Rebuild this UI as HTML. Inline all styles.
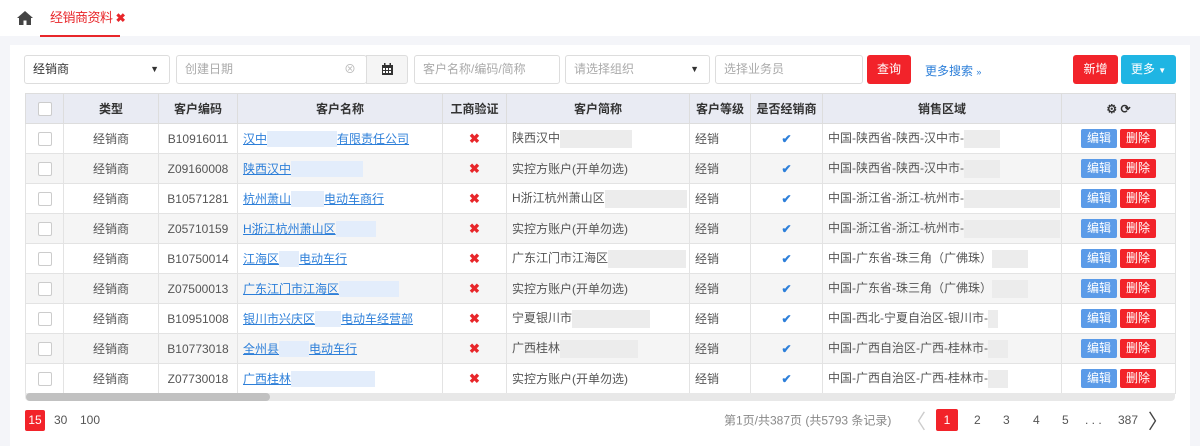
<!DOCTYPE html>
<html><head><meta charset="utf-8"><style>
*{box-sizing:border-box;margin:0;padding:0}
body{width:1200px;height:446px;overflow:hidden;background:#f4f5f9;font-family:"Liberation Sans","Noto Sans CJK SC",sans-serif;font-size:12px;color:#555;position:relative}
.top{position:absolute;left:0;top:0;width:1200px;height:36px;background:#fff}
.tab{position:absolute;left:40px;top:0;width:80px;height:37px;border-bottom:2px solid #e8262a;color:#e8262a;font-size:13px;line-height:36px;padding-left:10px;white-space:nowrap;letter-spacing:-0.5px}
.panel{position:absolute;left:10px;top:45px;width:1180px;height:401px;background:#fff}
.inp{position:absolute;top:55px;height:29px;border:1px solid #ddd;border-radius:3px;background:#fff;color:#aaa;line-height:27px;padding-left:8px;font-size:12px}
.btn{position:absolute;top:55px;height:29px;border-radius:3px;color:#fff;line-height:29px;text-align:center;font-size:12px}
table{position:absolute;left:25px;top:93px;border-collapse:collapse;table-layout:fixed;width:1150px}
th{background:#e9ebf3;height:30px;font-weight:bold;color:#333;border:1px solid #ddd;font-size:12px}
td{height:30px;border:1px solid #e3e3e3;text-align:center;white-space:nowrap;overflow:hidden;font-size:12px}
tr:nth-child(odd) td{background:#f5f5f5}
td.l{text-align:left;padding-left:5px}
a{color:#2d7fd9;text-decoration:underline}
.cb{display:inline-block;width:14px;height:14px;border:1px solid #ccc;border-radius:2px;background:#fff;vertical-align:middle}
.x{color:#e8262a;font-weight:bold;font-size:13px}
.ok{color:#2d7fd9;font-weight:bold}
.bl{display:inline-block;height:16px;vertical-align:middle;background:#e3edfb}
.bg{display:inline-block;height:18px;vertical-align:middle;background:#ececec}
.e{display:inline-block;width:36px;height:19px;line-height:19px;background:#5b9be8;color:#fff;border-radius:2px;margin-right:3px}
.d{display:inline-block;width:36px;height:19px;line-height:19px;background:#f2232a;color:#fff;border-radius:2px}
.pg{position:absolute;top:420px;transform:translateY(-50%);font-size:12px;color:#555}
</style></head><body>
<div class="top"></div>
<svg style="position:absolute;left:17px;top:11px" width="16" height="14" viewBox="0 0 16 14"><path d="M8 0L0 7h2v7h4.5V9.5h3V14H14V7h2z" fill="#444"/></svg>
<div class="tab">经销商资料 <b style="font-size:12px">✖</b></div>
<div class="panel"></div>
<div class="inp" style="left:24px;width:146px;color:#333">经销商<span style="position:absolute;right:10px;color:#333;font-size:9px">▼</span></div>
<div class="inp" style="left:176px;width:191px">创建日期<span style="position:absolute;right:10px;color:#bbb">⊗</span></div>
<div class="inp" style="left:366px;width:42px;background:#f5f5f5;border-radius:0 3px 3px 0;padding:0;text-align:center;color:#333">
<svg width="13" height="13" viewBox="0 0 13 13" style="margin-top:7px"><rect x="1" y="2" width="11" height="10" fill="#333"/><rect x="2" y="5" width="2" height="2" fill="#fff"/><rect x="5" y="5" width="2" height="2" fill="#fff"/><rect x="8" y="5" width="2" height="2" fill="#fff"/><rect x="2" y="8" width="2" height="2" fill="#fff"/><rect x="5" y="8" width="2" height="2" fill="#fff"/><rect x="8" y="8" width="2" height="2" fill="#fff"/><rect x="3" y="0" width="1.5" height="3" fill="#333"/><rect x="8.5" y="0" width="1.5" height="3" fill="#333"/></svg></div>
<div class="inp" style="left:414px;width:146px">客户名称/编码/简称</div>
<div class="inp" style="left:565px;width:145px">请选择组织<span style="position:absolute;right:10px;color:#333;font-size:9px">▼</span></div>
<div class="inp" style="left:715px;width:148px">选择业务员</div>
<div class="btn" style="left:867px;width:44px;background:#f2232a">查询</div>
<div style="position:absolute;left:925px;top:62px;color:#2d7fd9">更多搜索 <span style="font-size:9px">»</span></div>
<div class="btn" style="left:1073px;width:45px;background:#f2232a">新增</div>
<div class="btn" style="left:1121px;width:55px;background:#1fb5e3">更多 <span style="font-size:8px">▼</span></div>
<table>
<colgroup><col style="width:38px"><col style="width:95px"><col style="width:79px"><col style="width:205px"><col style="width:64px"><col style="width:183px"><col style="width:61px"><col style="width:72px"><col style="width:239px"><col style="width:114px"></colgroup>
<tr><th style="background:#e9ebf3"><span class="cb"></span></th><th style="background:#e9ebf3">类型</th><th style="background:#e9ebf3">客户编码</th><th>客户名称</th><th>工商验证</th><th>客户简称</th><th>客户等级</th><th>是否经销商</th><th>销售区域</th><th>⚙ ⟳</th></tr>
<tr><td><span class="cb"></span></td><td>经销商</td><td>B10916011</td><td class="l"><a>汉中</a><span class="bl" style="width:70px"></span><a>有限责任公司</a></td><td class="x">✖</td><td class="l">陕西汉中<span class="bg" style="width:72px"></span></td><td class="l">经销</td><td class="ok">✔</td><td class="l">中国-陕西省-陕西-汉中市-<span class="bg" style="width:36px"></span></td><td><span class="e">编辑</span><span class="d">删除</span></td></tr>
<tr><td><span class="cb"></span></td><td>经销商</td><td>Z09160008</td><td class="l"><a>陕西汉中</a><span class="bl" style="width:72px"></span></td><td class="x">✖</td><td class="l">实控方账户(开单勿选)</td><td class="l">经销</td><td class="ok">✔</td><td class="l">中国-陕西省-陕西-汉中市-<span class="bg" style="width:36px"></span></td><td><span class="e">编辑</span><span class="d">删除</span></td></tr>
<tr><td><span class="cb"></span></td><td>经销商</td><td>B10571281</td><td class="l"><a>杭州萧山</a><span class="bl" style="width:33px"></span><a>电动车商行</a></td><td class="x">✖</td><td class="l">H浙江杭州萧山区<span class="bg" style="width:82px"></span></td><td class="l">经销</td><td class="ok">✔</td><td class="l">中国-浙江省-浙江-杭州市-<span class="bg" style="width:96px"></span></td><td><span class="e">编辑</span><span class="d">删除</span></td></tr>
<tr><td><span class="cb"></span></td><td>经销商</td><td>Z05710159</td><td class="l"><a>H浙江杭州萧山区</a><span class="bl" style="width:40px"></span></td><td class="x">✖</td><td class="l">实控方账户(开单勿选)</td><td class="l">经销</td><td class="ok">✔</td><td class="l">中国-浙江省-浙江-杭州市-<span class="bg" style="width:96px"></span></td><td><span class="e">编辑</span><span class="d">删除</span></td></tr>
<tr><td><span class="cb"></span></td><td>经销商</td><td>B10750014</td><td class="l"><a>江海区</a><span class="bl" style="width:20px"></span><a>电动车行</a></td><td class="x">✖</td><td class="l">广东江门市江海区<span class="bg" style="width:78px"></span></td><td class="l">经销</td><td class="ok">✔</td><td class="l">中国-广东省-珠三角（广佛珠）<span class="bg" style="width:36px"></span></td><td><span class="e">编辑</span><span class="d">删除</span></td></tr>
<tr><td><span class="cb"></span></td><td>经销商</td><td>Z07500013</td><td class="l"><a>广东江门市江海区</a><span class="bl" style="width:60px"></span></td><td class="x">✖</td><td class="l">实控方账户(开单勿选)</td><td class="l">经销</td><td class="ok">✔</td><td class="l">中国-广东省-珠三角（广佛珠）<span class="bg" style="width:36px"></span></td><td><span class="e">编辑</span><span class="d">删除</span></td></tr>
<tr><td><span class="cb"></span></td><td>经销商</td><td>B10951008</td><td class="l"><a>银川市兴庆区</a><span class="bl" style="width:26px"></span><a>电动车经营部</a></td><td class="x">✖</td><td class="l">宁夏银川市<span class="bg" style="width:78px"></span></td><td class="l">经销</td><td class="ok">✔</td><td class="l">中国-西北-宁夏自治区-银川市-<span class="bg" style="width:10px"></span></td><td><span class="e">编辑</span><span class="d">删除</span></td></tr>
<tr><td><span class="cb"></span></td><td>经销商</td><td>B10773018</td><td class="l"><a>全州县</a><span class="bl" style="width:30px"></span><a>电动车行</a></td><td class="x">✖</td><td class="l">广西桂林<span class="bg" style="width:78px"></span></td><td class="l">经销</td><td class="ok">✔</td><td class="l">中国-广西自治区-广西-桂林市-<span class="bg" style="width:20px"></span></td><td><span class="e">编辑</span><span class="d">删除</span></td></tr>
<tr><td><span class="cb"></span></td><td>经销商</td><td>Z07730018</td><td class="l"><a>广西桂林</a><span class="bl" style="width:84px"></span></td><td class="x">✖</td><td class="l">实控方账户(开单勿选)</td><td class="l">经销</td><td class="ok">✔</td><td class="l">中国-广西自治区-广西-桂林市-<span class="bg" style="width:20px"></span></td><td><span class="e">编辑</span><span class="d">删除</span></td></tr>
</table>
<div style="position:absolute;left:25px;top:393px;width:1150px;height:8px;background:#e8e8e8;border-radius:0 0 4px 4px"></div>
<div style="position:absolute;left:26px;top:393px;width:244px;height:8px;background:#c1c1c1;border-radius:4px"></div>
<div class="pg" style="left:25px;width:20px;height:21px;line-height:21px;background:#f2232a;color:#fff;text-align:center;border-radius:2px;transform:none;top:410px">15</div>
<div class="pg" style="left:54px">30</div>
<div class="pg" style="left:80px">100</div>
<div class="pg" style="left:724px;color:#888">第1页/共387页 (共5793 条记录)</div>
<div class="pg" style="left:906px;color:#ccc;font-size:20px">〈</div>
<div class="pg" style="left:936px;width:22px;height:22px;line-height:22px;background:#f2232a;color:#fff;text-align:center;border-radius:2px;transform:none;top:409px">1</div>
<div class="pg" style="left:974px">2</div>
<div class="pg" style="left:1003px">3</div>
<div class="pg" style="left:1033px">4</div>
<div class="pg" style="left:1062px">5</div>
<div class="pg" style="left:1085px">. . .</div>
<div class="pg" style="left:1118px">387</div>
<div class="pg" style="left:1148px;font-size:20px;color:#444">〉</div>
</body></html>
